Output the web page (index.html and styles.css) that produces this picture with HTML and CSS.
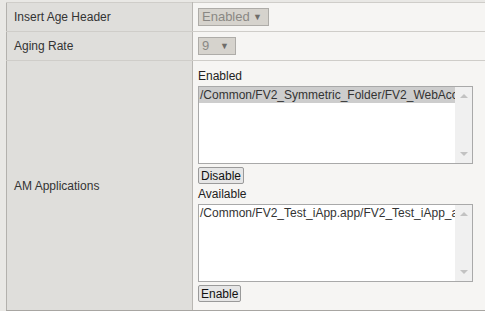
FILE: index.html
```html
<!DOCTYPE html>
<html lang="en">
<head>
  <meta charset="UTF-8" />
  <title>Web Acceleration Profile</title>
  <link rel="stylesheet" href="styles.css">
</head>
<body>
  <div id="container">
    <table class="props">
      <tr>
        <td class="label">Insert Age Header</td>
        <td class="value">
          <span class="fakeSelect wide">Enabled <span class="arrow">&#9660;</span></span>
        </td>
      </tr>
      <tr>
        <td class="label">Aging Rate</td>
        <td class="value">
          <span class="fakeSelect">9 <span class="arrow">&#9660;</span></span>
        </td>
      </tr>
      <tr>
        <td class="label">AM Applications</td>
        <td class="value apps">
          <div class="listTitle">Enabled</div>
          <div class="listbox">
            <div class="items">
              <div class="item selected">/Common/FV2_Symmetric_Folder/FV2_WebAccelerationApp</div>
            </div>
            <div class="scrollbar">
              <span class="up"></span>
              <span class="down"></span>
            </div>
          </div>
          <button type="button" class="btn">Disable</button>
          <div class="listTitle">Available</div>
          <div class="listbox">
            <div class="items">
              <div class="item">/Common/FV2_Test_iApp.app/FV2_Test_iApp_am</div>
            </div>
            <div class="scrollbar">
              <span class="up"></span>
              <span class="down"></span>
            </div>
          </div>
          <button type="button" class="btn">Enable</button>
        </td>
      </tr>
    </table>
  </div>
</body>
</html>
```

FILE: styles.css
```css
body {
  margin: 0;
  background-color: #e9e8e5;
  font-family: "Liberation Sans", Arial, sans-serif;
  font-size: 12px;
  color: #333333;
}

#container {
  padding: 2px 0 0 6px;
  overflow: hidden;
}

.props {
  border-collapse: collapse;
  width: 486px;
  border-left: 1px solid #b3b1ad;
  border-bottom: 2px solid #a8a6a2;
}

.props td {
  border-top: 1px solid #cfcdc9;
  border-bottom: 1px solid #cfcdc9;
  padding: 0;
  height: 28px;
}

.label {
  background-color: #dfdedb;
  width: 178px;
  padding-left: 7px !important;
  border-right: 1px solid #b9b7b3;
}

.value {
  background-color: #f6f5f3;
  padding-left: 5px !important;
}

.fakeSelect {
  display: inline-block;
  box-sizing: border-box;
  height: 18px;
  line-height: 16px;
  padding: 0 6px 0 3px;
  border: 1px solid #aeaca8;
  background-color: #d6d3cd;
  color: #8a8884;
  font-size: 13px;
  width: 38px;
  vertical-align: middle;
}

.fakeSelect.wide {
  width: 71px;
}

.fakeSelect .arrow {
  float: right;
  font-size: 9px;
  color: #6f6d69;
}

.props td.apps {
  height: auto;
  padding-top: 8px;
  padding-bottom: 5px;
  vertical-align: top;
}

.listTitle {
  height: 17px;
  line-height: 14px;
  color: #222222;
}

.listbox {
  display: flex;
  box-sizing: border-box;
  width: 275px;
  height: 78px;
  border: 1px solid #a9a9a9;
  background-color: #ffffff;
}

.items {
  flex: 1;
  overflow: hidden;
}

.item {
  white-space: nowrap;
  overflow: hidden;
  font-size: 12px;
  line-height: 16px;
  color: #333333;
  padding-left: 1px;
}

.item.selected {
  background-color: #cdcdcd;
}

.scrollbar {
  position: relative;
  width: 17px;
  background-color: #f0f0f0;
}

.scrollbar span {
  position: absolute;
  left: 5px;
  width: 0;
  height: 0;
  border-left: 4px solid transparent;
  border-right: 4px solid transparent;
}

.scrollbar .up {
  top: 7px;
  border-bottom: 4px solid #c2c2c2;
}

.scrollbar .down {
  bottom: 7px;
  border-top: 4px solid #c2c2c2;
}

.btn {
  display: block;
  margin: 3px 0 3px 0;
  padding: 0 2px;
  height: 17px;
  font-family: "Liberation Sans", Arial, sans-serif;
  font-size: 12px;
  line-height: 14px;
  color: #111111;
  background-color: #e6e6e6;
  border: 1px solid #9a9a9a;
  border-radius: 2px;
}
```
